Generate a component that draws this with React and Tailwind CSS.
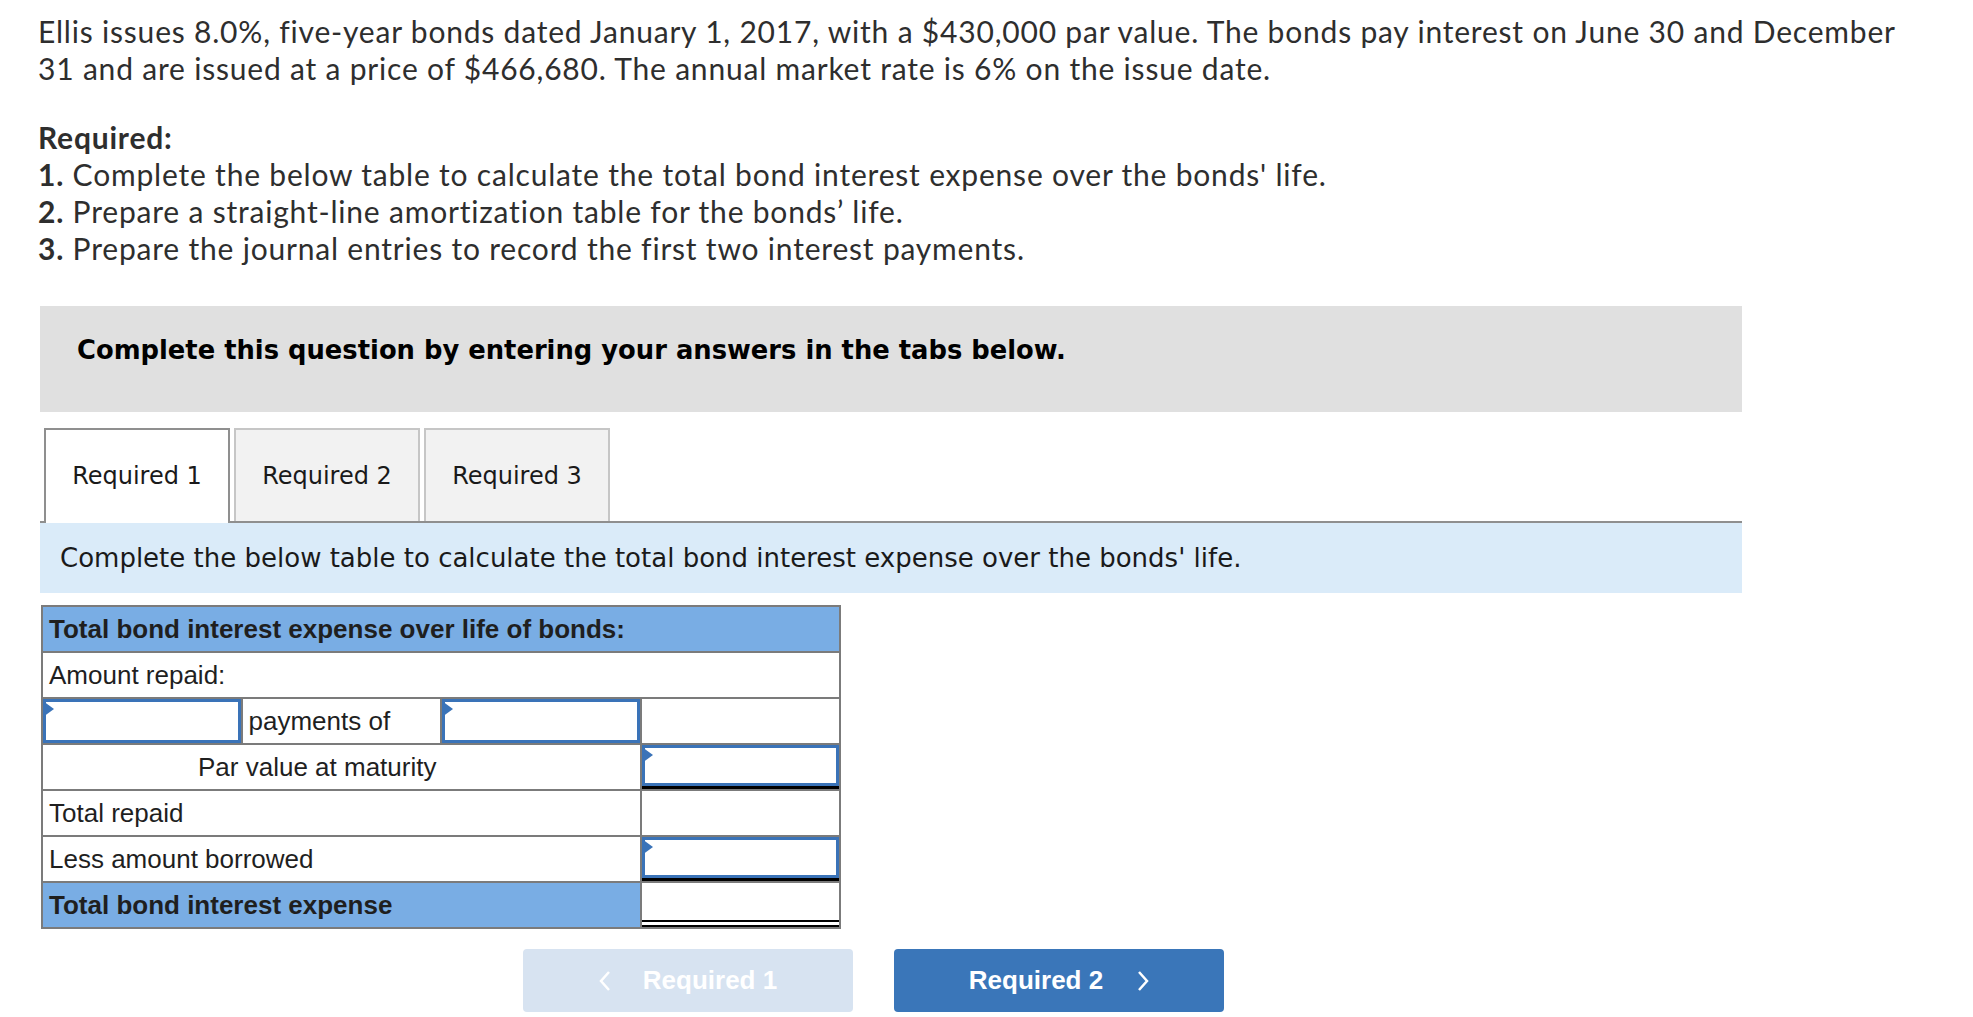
import React from "react";

// Blue corner marker on answer cells
const Marker = () => (
  <span className="absolute left-0 top-[2px] h-0 w-0 border-y-[8px] border-l-[11px] border-y-transparent border-l-[#3a73b8]" />
);

const InputCell = ({ underline = false }) => (
  <div className="relative flex flex-col bg-white">
    <div className="flex-1 border-[3px] border-[#3a73b8]" />
    {underline && <div className="h-[3px] bg-black" />}
    <Marker />
  </div>
);

const Chevron = ({ dir }) => (
  <svg width="12" height="22" viewBox="0 0 12 22">
    <polyline
      points={dir === "left" ? "10,2 2,11 10,20" : "2,2 10,11 2,20"}
      fill="none"
      stroke="white"
      strokeWidth="2.5"
    />
  </svg>
);

const tabs = ["Required 1", "Required 2", "Required 3"];

export default function App() {
  return (
    <div className="min-h-screen bg-white px-[38px] pt-[13px] text-[#2e2e2e]">
      {/* question text */}
      <div className="font-['Lato',sans-serif] text-[30px] leading-[37px] tracking-[0.8px]">
        <p>
          Ellis issues 8.0%, five-year bonds dated January 1, 2017, with a $430,000 par value. The bonds pay interest on June 30 and December
          <br />
          31 and are issued at a price of $466,680. The annual market rate is 6% on the issue date.
        </p>
        <div className="mt-[32px]">
          <p className="font-bold">Required:</p>
          <p><span className="font-bold">1.</span> Complete the below table to calculate the total bond interest expense over the bonds' life.</p>
          <p><span className="font-bold">2.</span> Prepare a straight-line amortization table for the bonds’ life.</p>
          <p><span className="font-bold">3.</span> Prepare the journal entries to record the first two interest payments.</p>
        </div>
      </div>

      {/* instructions box */}
      <div className="ml-[2px] mt-[39px] w-[1702px] bg-[#e0e0e0] pl-[37px] pt-[29px] pb-[47px] font-['DejaVu_Sans',sans-serif] text-[25.8px] font-bold leading-[30px] text-black">
        Complete this question by entering your answers in the tabs below.
      </div>

      {/* tabs */}
      <div className="ml-[2px] mt-[16px] flex w-[1702px] items-end gap-[4px] border-b-2 border-[#8f8f8f] pl-[4px] font-['DejaVu_Sans',sans-serif] text-[24px] text-[#1a1a1a]">
        {tabs.map((t, i) =>
          i === 0 ? (
            <div
              key={t}
              className="relative -mb-[2px] flex h-[95px] w-[186px] items-center justify-center border-2 border-b-0 border-[#8f8f8f] bg-white pb-[2px]"
            >
              {t}
            </div>
          ) : (
            <div
              key={t}
              className="flex h-[93px] w-[186px] items-center justify-center border-2 border-b-0 border-[#c6c6c6] bg-[#f2f2f2]"
            >
              {t}
            </div>
          )
        )}
      </div>
      <div className="ml-[2px] flex h-[70px] w-[1702px] items-center bg-[#daebf9] pl-[20px] font-['DejaVu_Sans',sans-serif] text-[26px] text-[#1a1a1a]">
        Complete the below table to calculate the total bond interest expense over the bonds' life.
      </div>

      {/* worksheet table */}
      <div className="ml-[3px] mt-[12px] grid w-[800px] grid-cols-4 auto-rows-[44px] gap-[2px] bg-[#7b7b7b] p-[2px] font-['Liberation_Sans',Arial,sans-serif] text-[26px] text-[#1f1f1f]">
        <div className="col-span-4 flex items-center bg-[#79ade4] pl-[6px] font-bold">
          Total bond interest expense over life of bonds:
        </div>
        <div className="col-span-4 flex items-center bg-white pl-[6px]">Amount repaid:</div>

        <InputCell />
        <div className="flex items-center bg-white pl-[6px]">payments of</div>
        <InputCell />
        <div className="bg-white" />

        <div className="col-span-3 flex items-center bg-white pl-[155px]">Par value at maturity</div>
        <InputCell underline />

        <div className="col-span-3 flex items-center bg-white pl-[6px]">Total repaid</div>
        <div className="bg-white" />

        <div className="col-span-3 flex items-center bg-white pl-[6px]">Less amount borrowed</div>
        <InputCell underline />

        <div className="col-span-3 flex items-center bg-[#79ade4] pl-[6px] font-bold">Total bond interest expense</div>
        <div className="border-b-[7px] border-double border-black bg-white" />
      </div>

      {/* nav buttons */}
      <div className="ml-[485px] mt-[20px] flex gap-[41px] font-['Liberation_Sans',Arial,sans-serif] text-[26px] font-bold text-white">
        <div className="flex h-[63px] w-[330px] items-center justify-center gap-[32px] rounded-[4px] bg-[#d7e3f1]">
          <Chevron dir="left" />
          <span>Required 1</span>
        </div>
        <div className="flex h-[63px] w-[330px] items-center justify-center gap-[34px] rounded-[4px] bg-[#3a76b9]">
          <span>Required 2</span>
          <Chevron dir="right" />
        </div>
      </div>
    </div>
  );
}
